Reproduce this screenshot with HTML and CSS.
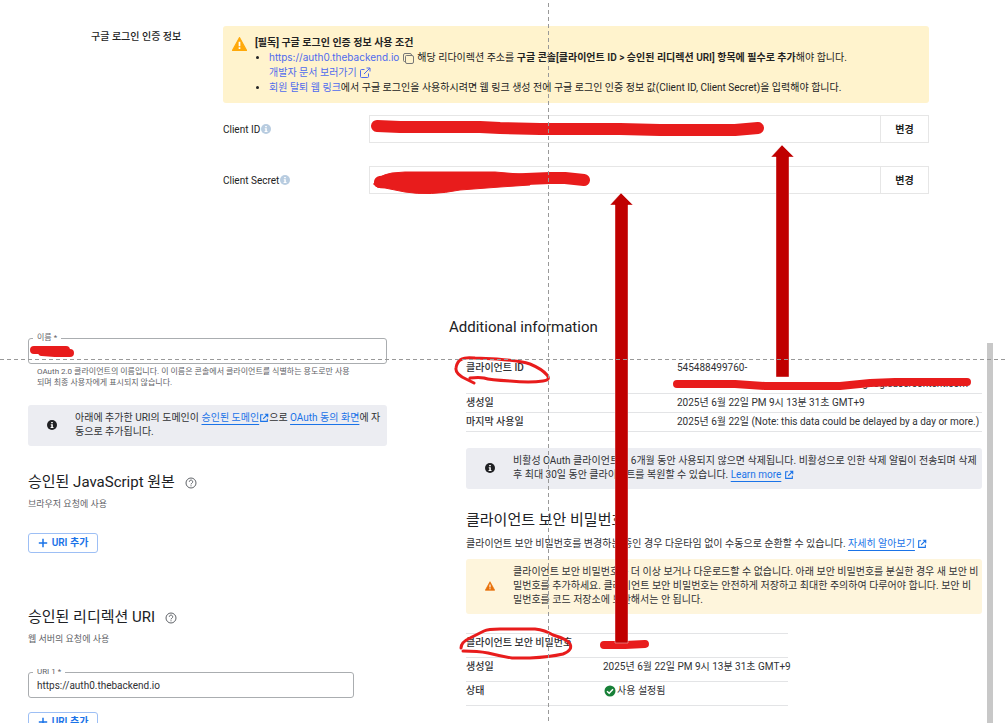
FILE: index.html
```html
<!DOCTYPE html>
<html lang="ko">
<head>
  <meta charset="UTF-8">
  <meta name="viewport" content="width=device-width, initial-scale=1.0">
  <title>구글 로그인 인증 정보</title>
  <link rel="stylesheet" href="styles.css">
</head>
<body>
  <svg class="symbols" aria-hidden="true">
    <symbol id="open" viewBox="0 0 12 12">
      <path d="M5 2H2v8h8V7M7 1.500h3.500V5M10.200 1.800L5 7" fill="none" stroke="currentColor" stroke-width="1.300"/>
    </symbol>
    <symbol id="share" viewBox="0 0 12 12">
      <path d="M5.500 2.500H2.500Q1.500 2.500 1.500 3.500V9.500Q1.500 10.500 2.500 10.500H8.500Q9.500 10.500 9.500 9.500V6.500M7.500 1H11V4.500M10.800 1.200L5 7" fill="none" stroke="currentColor"/>
    </symbol>
    <symbol id="info" viewBox="0 0 12 12">
      <circle cx="6" cy="6" r="6" fill="currentColor"/>
      <path d="M5 2.300h2v1.500H5zM4.500 5H7v3.300h.8v1.200H4.300V8.300h.9V6.200h-.7z" fill="#fff"/>
    </symbol>
    <symbol id="warn" viewBox="0 0 14 13">
      <path d="M7 .5L13.600 12.500H.4z" fill="currentColor" stroke="currentColor" stroke-linejoin="round"/>
      <path d="M6.200 4.500h1.600v4H6.200zM6.200 9.600h1.600v1.500H6.200z" fill="#fff"/>
    </symbol>
    <symbol id="help" viewBox="0 0 12 12">
      <circle cx="6" cy="6" r="5" fill="none" stroke="currentColor"/>
      <path d="M4.300 4.800a1.700 1.700 0 1 1 2.600 1.400C6.200 6.600 6 6.900 6 7.400M6 8.300v1" fill="none" stroke="currentColor"/>
    </symbol>
    <symbol id="plus" viewBox="0 0 10 10">
      <path d="M5 .8v8.400M.8 5h8.400" stroke="currentColor" stroke-width="1.500"/>
    </symbol>
  </svg>

  <div class="page">
    <section class="login">
      <h2 class="login-title">구글 로그인 인증 정보</h2>
      <div class="login-body">
        <div class="condition">
          <svg class="condition-icon"><use href="#warn"/></svg>
          <div>
            <strong>[필독] 구글 로그인 인증 정보 사용 조건</strong>
            <ul>
              <li>
                <a href="#" class="url">https://auth0.thebackend.io</a>
                <svg class="copy" viewBox="0 0 12 12"><path d="M4.500 3.500H10Q11.500 3.500 11.500 5V10Q11.500 11.500 10 11.500H5Q3.500 11.500 3.500 10V4.500Q3.500 3.500 4.500 3.500M3.500 9.500H2.500Q1.500 9.500 1.500 8.500V3Q1.500 1.500 3 1.500H8Q9.500 1.500 9.500 3V3.500" fill="none" stroke="currentColor"/></svg>
                해당 리다이렉션 주소를 <b>구글 콘솔[클라이언트 ID &gt; 승인된 리디렉션 URI] 항목에 필수로 추가</b>해야 합니다.<br>
                <a href="#">개발자 문서 보러가기 <svg class="open"><use href="#share"/></svg></a>
              </li>
              <li><a href="#">회원 탈퇴 웹 링크</a>에서 구글 로그인을 사용하시려면 웹 링크 생성 전에 구글 로그인 인증 정보 값(Client ID, Client Secret)을 입력해야 합니다.</li>
            </ul>
          </div>
        </div>
        <div class="key-row">
          <label for="client-id">Client ID<svg class="key-info"><use href="#info"/></svg></label>
          <div class="key-box">
            <input type="text" id="client-id" readonly>
            <button type="button">변경</button>
          </div>
        </div>
        <div class="key-row">
          <label for="client-secret">Client Secret<svg class="key-info"><use href="#info"/></svg></label>
          <div class="key-box">
            <input type="text" id="client-secret" readonly>
            <button type="button">변경</button>
          </div>
        </div>
      </div>
    </section>

    <div class="console">
      <section class="settings">
        <div class="field">
          <label for="name">이름 *</label>
          <input type="text" id="name">
        </div>
        <p class="hint">OAuth 2.0 클라이언트의 이름입니다. 이 이름은 콘솔에서 클라이언트를 식별하는 용도로만 사용<br>되며 최종 사용자에게 표시되지 않습니다.</p>
        <div class="banner">
          <svg class="banner-icon"><use href="#info"/></svg>
          <p>아래에 추가한 URI의 도메인이 <a href="#">승인된 도메인</a><svg class="open"><use href="#open"/></svg>으로 <a href="#">OAuth 동의 화면</a>에 자<br>동으로 추가됩니다.</p>
        </div>

        <h3>승인된 JavaScript 원본 <svg class="help"><use href="#help"/></svg></h3>
        <p class="sub">브라우저 요청에 사용</p>
        <button type="button" class="add"><svg><use href="#plus"/></svg>URI 추가</button>

        <h3 class="second">승인된 리디렉션 URI <svg class="help"><use href="#help"/></svg></h3>
        <p class="sub">웹 서버의 요청에 사용</p>
        <div class="field uri">
          <label for="uri1">URI 1 *</label>
          <input type="text" id="uri1" value="https://auth0.thebackend.io">
        </div>
        <button type="button" class="add"><svg><use href="#plus"/></svg>URI 추가</button>
      </section>

      <section class="details">
        <h3>Additional information</h3>
        <div class="details-body">
          <table class="client">
            <tr><th>클라이언트 ID</th><td>545488499760-<br><span class="domain">googleusercontent.com</span></td></tr>
            <tr><th>생성일</th><td>2025년 6월 22일 PM 9시 13분 31초 GMT+9</td></tr>
            <tr><th>마지막 사용일</th><td>2025년 6월 22일 (Note: this data could be delayed by a day or more.)</td></tr>
          </table>
          <div class="banner">
            <svg class="banner-icon"><use href="#info"/></svg>
            <p>비활성 OAuth 클라이언트는 6개월 동안 사용되지 않으면 삭제됩니다. 비활성으로 인한 삭제 알림이 전송되며 삭제<br>후 최대 30일 동안 클라이언트를 복원할 수 있습니다. <a href="#">Learn more</a> <svg class="open"><use href="#open"/></svg></p>
          </div>
          <h3 class="secret-title">클라이언트 보안 비밀번호</h3>
          <p class="rotate">클라이언트 보안 비밀번호를 변경하는 중인 경우 다운타임 없이 수동으로 순환할 수 있습니다. <a href="#">자세히 알아보기</a> <svg class="open"><use href="#open"/></svg></p>
          <div class="banner caution">
            <svg class="banner-icon"><use href="#warn"/></svg>
            <p>클라이언트 보안 비밀번호는 더 이상 보거나 다운로드할 수 없습니다. 아래 보안 비밀번호를 분실한 경우 새 보안 비<br>밀번호를 추가하세요. 클라이언트 보안 비밀번호는 안전하게 저장하고 최대한 주의하여 다루어야 합니다. 보안 비<br>밀번호를 코드 저장소에 보관해서는 안 됩니다.</p>
          </div>
          <table class="secret">
            <tr><th>클라이언트 보안 비밀번호</th><td></td></tr>
            <tr><th>생성일</th><td>2025년 6월 22일 PM 9시 13분 31초 GMT+9</td></tr>
            <tr><th>상태</th><td class="status"><svg viewBox="0 0 12 12"><circle cx="6" cy="6" r="5.500" fill="#188038"/><path d="M3 6.200l2.200 2.100L9 4.300" fill="none" stroke="#fff" stroke-width="1.500"/></svg>사용 설정됨</td></tr>
          </table>
        </div>
      </section>
      <div class="scrollbar"></div>
    </div>

    <!-- red marks and arrows drawn over both screens -->
    <svg class="marks" width="1008" height="723" aria-hidden="true">
      <g class="pen">
        <path class="wide" d="M377 126L400 127H480L500 128L540 129H620L660 130L690 130H735L758 128"/>
        <path class="wide" d="M380 182L400 180L440 179L500 180L550 178L565 178L584 180"/>
        <path d="M374 184Q376 176 392 173L405 172H495L530 175V185L500 187L460 190Q430 196 405 192L385 188Q375 188 374 184Z" class="blob"/>
        <path class="mid" d="M34 350L66 350M42 352L55 353L70 353"/>
        <path class="mid" d="M677 384H735L765 386H840L870 383L895 382H967"/>
        <path class="mid" d="M604 645L625 645L645 644"/>
        <path class="loop" d="M474 383L466 379Q455 374 456 368Q457 361 462 359Q465 357 475 358L497 359Q520 361 530 364Q542 369 547 375Q551 380 543 381Q530 383 510 381Q490 380 484 378Q479 377 470 378"/>
        <path class="loop" d="M461 648Q461 642 470 638L484 631Q488 629 500 629L535 629Q545 630 553 635Q567 639 570 644Q573 650 563 654Q550 657 530 658L512 658Q500 656 488 653Q478 651 463 651"/>
      </g>
      <g class="arrow">
        <path d="M621 193L633 205H628V643H615V205H610Z"/>
        <path d="M782 145L794 157H789V377H776V157H771Z"/>
      </g>
      <path class="guide" d="M548.500 3V723M0 359.500H1008"/>
    </svg>
  </div>
</body>
</html>
```

FILE: styles.css
```css
* {
  box-sizing: border-box;
}

body {
  margin: 0;
  font-family: Roboto, "Noto Sans CJK KR", sans-serif;
  font-size: 10px;
  line-height: 14px;
  color: #303134;
  background: #fff;
}

h2, h3, p, ul {
  margin: 0;
  padding: 0;
}

input, button {
  font: inherit;
  color: inherit;
}

.symbols {
  display: none;
}

.page {
  position: relative;
  height: 100vh;
  overflow: hidden;
}

/* login settings */
.login {
  display: grid;
  grid-template-columns: 132px 1fr;
  min-height: 317px;
  padding: 26px 79px 0 91px;
  line-height: 15px;
  color: #222;
}

.login-title {
  padding-top: 3px;
  font-size: 10px;
  font-weight: 500;
}

.condition {
  display: flex;
  gap: 8px;
  padding: 9px 9px 8px;
  border-radius: 3px;
  background: #fff3cd;
  white-space: nowrap;
}

.condition-icon {
  width: 15px;
  height: 14px;
  margin-top: 2px;
  color: #ffa90a;
}

.condition strong {
  display: block;
  font-weight: 700;
}

.condition b {
  font-weight: 600;
}

.condition ul {
  padding-left: 14px;
}

.condition a {
  color: #4f6bed;
  text-decoration: none;
}

.condition .url {
  font-family: Inter, sans-serif;
}

.copy {
  width: 12px;
  height: 12px;
  margin-right: 1px;
  vertical-align: -3px;
  color: #777;
}

.open {
  width: 10px;
  height: 10px;
  vertical-align: -2px;
  color: #1a73e8;
}

.condition .open {
  width: 12px;
  height: 12px;
  vertical-align: -3px;
  color: #4f6bed;
}

.key-row {
  display: grid;
  grid-template-columns: 146px 1fr;
  align-items: center;
  margin-top: 12px;
}

.key-row + .key-row {
  margin-top: 23px;
}

.key-row label {
  display: flex;
  align-items: center;
}

.key-info {
  width: 10px;
  height: 10px;
  margin-left: 1px;
  color: #b8cce0;
}

.key-box {
  display: flex;
  height: 28px;
  border: 1px solid #e6e6e6;
}

.key-box input {
  flex: 1;
  min-width: 0;
  border: 0;
}

.key-box button {
  width: 48px;
  padding: 0;
  border: 0;
  border-left: 1px solid #e6e6e6;
  background: #fff;
  font-weight: 600;
}

/* cloud console */
.console {
  display: flex;
  padding: 0 15px 0 28px;
}

.settings {
  flex: 0 0 359px;
  margin-right: 62px;
  padding-top: 21px;
}

h3 {
  font-size: 15px;
  line-height: 20px;
  font-weight: 400;
  color: #202124;
}

.field {
  position: relative;
  height: 26px;
}

.field label {
  position: absolute;
  top: -6px;
  left: 5px;
  padding: 0 4px;
  background: #fff;
  font-size: 8px;
  line-height: 12px;
  color: #5f6368;
}

.field input {
  width: 100%;
  height: 26px;
  padding: 0 8px;
  border: 1px solid #aaadb0;
  border-radius: 3px;
  background: #fff;
}

.hint {
  margin: 2px 0 17px;
  padding-left: 9px;
  font-size: 8px;
  line-height: 11px;
  color: #5f6368;
  white-space: nowrap;
}

.banner {
  display: flex;
  align-items: center;
  gap: 18px;
  padding: 6px 0 7px 19px;
  border-radius: 3px;
  background: #ecedf2;
  white-space: nowrap;
}

.banner-icon {
  flex: none;
  width: 10px;
  height: 10px;
  color: #202124;
}

.banner a, .rotate a {
  color: #1a73e8;
  text-underline-offset: 3px;
}

.settings h3 {
  margin-top: 26px;
}

.settings .second {
  margin-top: 54px;
}

.help {
  width: 12px;
  height: 12px;
  margin-left: 6px;
  vertical-align: -2px;
  color: #5f6368;
}

.sub {
  margin-top: 6px;
  font-size: 9px;
  line-height: 12px;
  color: #5f6368;
}

.add {
  display: flex;
  align-items: center;
  justify-content: center;
  gap: 4px;
  width: 70px;
  height: 20px;
  margin-top: 23px;
  padding: 0;
  border: 1px solid #9dbff5;
  border-radius: 3px;
  background: #fff;
  font-weight: 600;
  color: #1a73e8;
}

.add svg {
  width: 10px;
  height: 10px;
}

.uri {
  width: 326px;
  margin-top: 27px;
}

.uri + .add {
  margin-top: 14px;
}

.details {
  flex: 1;
  min-width: 0;
}

.details-body {
  padding: 22px 5px 0 17px;
}

table {
  border-collapse: collapse;
  table-layout: fixed;
}

th, td {
  padding: 0;
  text-align: left;
  vertical-align: top;
  font-weight: 400;
  white-space: nowrap;
}

th {
  font-weight: 500;
}

tr {
  border-bottom: 1px solid #e3e4e6;
}

.client {
  width: 100%;
  line-height: 16px;
}

.client th {
  width: 211px;
}

.client th, .client td {
  padding: 1px 0;
}

.domain {
  display: block;
  padding-right: 14px;
  text-align: right;
}

.details-body .banner {
  margin-top: 16px;
}

.secret-title {
  margin-top: 21px;
}

.rotate {
  margin-top: 7px;
  white-space: nowrap;
}

.details-body .caution {
  margin-top: 8px;
  background: #fef5dc;
}

.caution .banner-icon {
  color: #e8710a;
}

.secret {
  width: 322px;
  margin-top: 19px;
  border-top: 1px solid #e3e4e6;
}

.secret th {
  width: 137px;
}

.secret tr {
  height: 24px;
}

.secret th, .secret td {
  padding-top: 2px;
}

.status svg {
  width: 12px;
  height: 12px;
  margin: 0 1px;
  vertical-align: -3px;
}

.scrollbar {
  width: 6px;
  margin-top: 26px;
  background: #c8c8c8;
}

/* annotations */
.marks {
  position: absolute;
  top: 0;
  left: 0;
  pointer-events: none;
}

.pen path {
  fill: none;
  stroke: #e81c1c;
  stroke-linecap: round;
  stroke-linejoin: round;
}

.pen .wide {
  stroke-width: 12px;
}

.pen .mid {
  stroke-width: 8px;
}

.pen .loop {
  stroke-width: 3px;
}

.pen .blob {
  fill: #e81c1c;
}

.arrow path {
  fill: #c00000;
  stroke: #fff;
  stroke-opacity: 0.4;
}

.guide {
  fill: none;
  stroke: #999;
  stroke-dasharray: 4 3;
}
```
